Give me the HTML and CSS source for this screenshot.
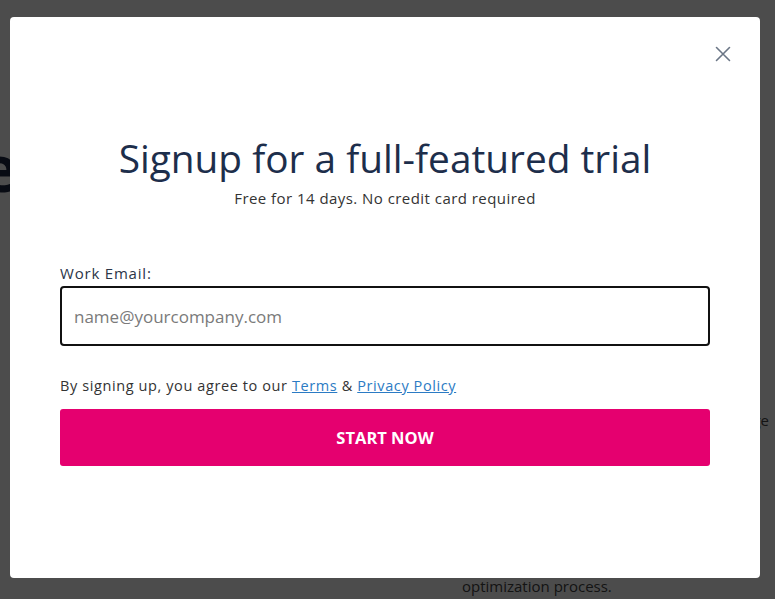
FILE: index.html
```html
<!DOCTYPE html>
<html lang="en">
<head>
<meta charset="utf-8">
<title>Signup</title>
<link rel="stylesheet" href="styles.css">
</head>
<body>
<div class="page">
  <div class="hero">
    <h1 class="hero-title">Re</h1>
    <p class="hero-sub">Run</p>
  </div>
  <div class="features">
    <div class="feature-left"></div>
    <div class="feature-right">
      <p class="feature-text feature-first">every step of the large</p>
      <p class="feature-text feature-end">optimization process.</p>
    </div>
  </div>
</div>

<div class="overlay">
  <div class="modal" role="dialog" aria-labelledby="modal-title">
    <button class="close" type="button" aria-label="Close">
      <svg width="16" height="16" viewBox="0 0 16 16" aria-hidden="true">
        <path d="M1.5 1.5 L14.5 14.5 M14.5 1.5 L1.5 14.5" stroke="#6b7686" stroke-width="1.6" fill="none" stroke-linecap="round"/>
      </svg>
    </button>
    <h2 class="title" id="modal-title">Signup for a full-featured trial</h2>
    <p class="subtitle">Free for 14 days. No credit card required</p>
    <form class="form">
      <label class="label" for="email">Work Email:</label>
      <input class="input" id="email" type="email" placeholder="name@yourcompany.com">
      <p class="terms">By signing up, you agree to our <a href="#">Terms</a> &amp; <a href="#">Privacy Policy</a></p>
      <button class="submit" type="button">START NOW</button>
    </form>
  </div>
</div>
</body>
</html>
```
FILE: styles.css
```css
* { box-sizing: border-box; }
html, body { margin: 0; padding: 0; }
body {
  font-family: "Open Sans", "Noto Sans", sans-serif;
  background: #fff;
  width: 775px;
  height: 599px;
  overflow: hidden;
}

/* background page */
.page {
  padding-top: 128px;
}
.hero {
  margin-left: -62px;
}
.hero-title {
  margin: 0;
  font-size: 64px;
  font-weight: 700;
  color: #1c2540;
  line-height: 80px;
}
.hero-sub {
  margin: 12px 0 0 0;
  font-size: 20px;
  line-height: 27px;
  color: #333;
}
.features {
  display: flex;
  gap: 20px;
  margin-top: 162px;
}
.feature-left { width: 442px; flex: none; }
.feature-right { width: 307px; flex: none; }
.feature-text {
  margin: 0;
  font-size: 15px;
  color: #444;
  line-height: 22px;
  white-space: nowrap;
}
.feature-first { text-align: right; }
.feature-end { margin-top: 144px; }

/* overlay + modal */
.overlay {
  position: fixed;
  inset: 0;
  background: rgba(0, 0, 0, 0.7);
  display: flex;
  align-items: flex-start;
  padding: 17px 0 0 10px;
}
.modal {
  position: relative;
  width: 750px;
  height: 561px;
  background: #fff;
  border-radius: 4px;
  padding: 118px 50px 0 50px;
}
.close {
  position: absolute;
  top: 29px;
  right: 29px;
  width: 16px;
  height: 16px;
  padding: 0;
  border: 0;
  background: none;
  cursor: pointer;
  display: flex;
}
.title {
  margin: 0;
  text-align: center;
  font-size: 38.8px;
  font-weight: 400;
  color: #1d2e4b;
  line-height: 46px;
}
.subtitle {
  margin: 7px 0 0 0;
  text-align: center;
  font-size: 15px;
  color: #333;
  line-height: 20px;
  letter-spacing: 0.45px;
}
.form {
  display: flex;
  flex-direction: column;
  margin-top: 55px;
}
.label {
  font-size: 15px;
  font-weight: 500;
  color: #2b3547;
  letter-spacing: 0.8px;
  line-height: 20px;
}
.input {
  margin-top: 3px;
  height: 60px;
  border: 2px solid #111;
  border-radius: 4px;
  padding: 0 12px;
  font-family: inherit;
  font-size: 17px;
  color: #333;
  outline: none;
}
.input::placeholder { color: #7a7a7a; }
.terms {
  margin: 30px 0 0 0;
  font-size: 14.5px;
  color: #333;
  letter-spacing: 0.6px;
  line-height: 20px;
}
.terms a { color: #2b7bc4; }
.submit {
  margin-top: 13px;
  height: 57px;
  border: 0;
  border-radius: 3px;
  background: #e5006f;
  color: #fff;
  font-family: inherit;
  font-size: 16.5px;
  font-weight: 700;
  letter-spacing: 0;
  cursor: pointer;
}
```
